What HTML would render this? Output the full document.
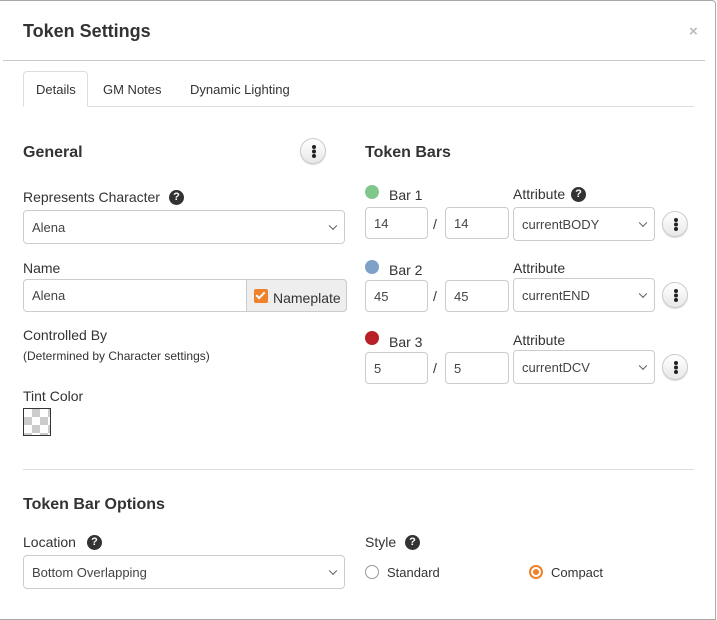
<!DOCTYPE html>
<html><head><style>
*{box-sizing:border-box;margin:0;padding:0}
body{width:717px;height:596px;background:#fff;font-family:"Liberation Sans",Arial,sans-serif;color:#333;position:relative;overflow:hidden}
.a{position:absolute;white-space:nowrap}
.frame{position:absolute;left:0;top:0;width:716px;height:620px;border:1px solid #aaa;border-left:none;border-radius:0 4px 0 0}
.b{font-weight:bold;font-size:16px;color:#333}
.l{font-size:14px;color:#333}
.in{position:absolute;border:1px solid #ccc;border-radius:4px;background:#fff;font-size:13px;color:#444;padding-left:8px;display:flex;align-items:center}
.sel:after{content:"";position:absolute;right:8px;top:50%;width:5px;height:5px;border-right:1.3px solid #555;border-bottom:1.3px solid #555;transform:translateY(-70%) rotate(45deg)}
.q{position:absolute;width:15px;height:15px;border-radius:50%;background:#333;color:#fff;font-size:11px;font-weight:bold;text-align:center;line-height:15px}
.k{position:absolute;width:26px;height:26px;border-radius:50%;border:1px solid #ccc;background:linear-gradient(#fff,#e8e8e8);box-shadow:0 1px 1px rgba(0,0,0,.15)}
.k:before{content:"";position:absolute;left:10.5px;top:6px;width:4px;height:4px;border-radius:50%;background:#222;box-shadow:0 4.5px 0 #222,0 9px 0 #222}
.dot{position:absolute;width:14px;height:14px;border-radius:50%}
.hr{position:absolute;height:1px;background:#ddd}
</style></head><body>
<div class="frame"></div>
<div class="a" style="left:23px;top:21px;font-size:18px;font-weight:bold;color:#333">Token Settings</div>
<div class="a" style="left:689px;top:23px;font-size:15px;font-weight:bold;color:#bbb">×</div>
<div class="hr" style="left:3px;top:60px;width:702px;background:#c8c8c8"></div>
<div class="hr" style="left:23px;top:106px;width:671px"></div>
<div class="a" style="left:23px;top:71px;width:65px;height:36px;border:1px solid #ddd;border-bottom:1px solid #fff;border-radius:4px 4px 0 0;background:#fff"></div>
<div class="a" style="left:36px;top:82px;font-size:13px">Details</div>
<div class="a" style="left:103px;top:82px;font-size:13px">GM Notes</div>
<div class="a" style="left:190px;top:82px;font-size:13px">Dynamic Lighting</div>

<div class="a b" style="left:23px;top:144px">General</div>
<div class="k" style="left:300px;top:138px"></div>
<div class="a l" style="left:23px;top:189px">Represents Character</div>
<div class="q" style="left:169px;top:190px">?</div>
<div class="in sel" style="left:23px;top:210px;width:322px;height:34px">Alena</div>
<div class="a l" style="left:23px;top:260px">Name</div>
<div class="in" style="left:23px;top:279px;width:324px;height:33px">Alena</div>
<div class="a" style="left:246px;top:279px;width:101px;height:33px;background:#eee;border:1px solid #ccc;border-radius:0 4px 4px 0"></div>
<div class="a" style="left:254px;top:289px;width:14px;height:14px;background:#f0812b;border-radius:2px"></div>
<div class="a" style="left:258px;top:290px;width:5px;height:9px;border-right:2px solid #fff;border-bottom:2px solid #fff;transform:rotate(45deg)"></div>
<div class="a l" style="left:273px;top:290px">Nameplate</div>
<div class="a l" style="left:23px;top:327px">Controlled By</div>
<div class="a" style="left:23px;top:349px;font-size:12px">(Determined by Character settings)</div>
<div class="a l" style="left:23px;top:388px">Tint Color</div>
<div class="a" style="left:23px;top:408px;width:28px;height:28px;border:1px solid #333;background-color:#fff;background-image:linear-gradient(45deg,#ccc 25%,transparent 25%,transparent 75%,#ccc 75%),linear-gradient(45deg,#ccc 25%,transparent 25%,transparent 75%,#ccc 75%);background-size:16px 16px;background-position:0 0,8px 8px"></div>

<div class="a b" style="left:365px;top:144px">Token Bars</div>
<div class="dot" style="left:365px;top:185px;background:#7fc78d"></div>
<div class="a l" style="left:389px;top:187px">Bar 1</div>
<div class="a l" style="left:513px;top:186px">Attribute</div>
<div class="q" style="left:571px;top:187px">?</div>
<div class="in" style="left:365px;top:207px;width:63px;height:32px">14</div>
<div class="a l" style="left:433px;top:216px">/</div>
<div class="in" style="left:445px;top:207px;width:64px;height:32px">14</div>
<div class="in sel" style="left:513px;top:207px;width:142px;height:34px">currentBODY</div>
<div class="k" style="left:662px;top:211px"></div>

<div class="dot" style="left:365px;top:260px;background:#7fa1c8"></div>
<div class="a l" style="left:389px;top:262px">Bar 2</div>
<div class="a l" style="left:513px;top:260px">Attribute</div>
<div class="in" style="left:365px;top:280px;width:63px;height:32px">45</div>
<div class="a l" style="left:433px;top:288px">/</div>
<div class="in" style="left:445px;top:280px;width:64px;height:32px">45</div>
<div class="in sel" style="left:513px;top:278px;width:142px;height:34px">currentEND</div>
<div class="k" style="left:662px;top:282px"></div>

<div class="dot" style="left:365px;top:331px;background:#b81f27"></div>
<div class="a l" style="left:389px;top:334px">Bar 3</div>
<div class="a l" style="left:513px;top:332px">Attribute</div>
<div class="in" style="left:365px;top:352px;width:63px;height:32px">5</div>
<div class="a l" style="left:433px;top:360px">/</div>
<div class="in" style="left:445px;top:352px;width:64px;height:32px">5</div>
<div class="in sel" style="left:513px;top:350px;width:142px;height:34px">currentDCV</div>
<div class="k" style="left:662px;top:354px"></div>

<div class="hr" style="left:23px;top:469px;width:671px"></div>
<div class="a b" style="left:23px;top:496px">Token Bar Options</div>
<div class="a l" style="left:23px;top:534px">Location</div>
<div class="q" style="left:87px;top:535px">?</div>
<div class="in sel" style="left:23px;top:555px;width:322px;height:34px">Bottom Overlapping</div>
<div class="a l" style="left:365px;top:534px">Style</div>
<div class="q" style="left:405px;top:535px">?</div>
<div class="a" style="left:365px;top:565px;width:14px;height:14px;border-radius:50%;border:1.5px solid #999"></div>
<div class="a" style="left:387px;top:565px;font-size:13px">Standard</div>
<div class="a" style="left:529px;top:565px;width:14px;height:14px;border-radius:50%;border:2px solid #f0812b"></div>
<div class="a" style="left:533px;top:569px;width:6px;height:6px;border-radius:50%;background:#f0812b"></div>
<div class="a" style="left:551px;top:565px;font-size:13px">Compact</div>
</body></html>
